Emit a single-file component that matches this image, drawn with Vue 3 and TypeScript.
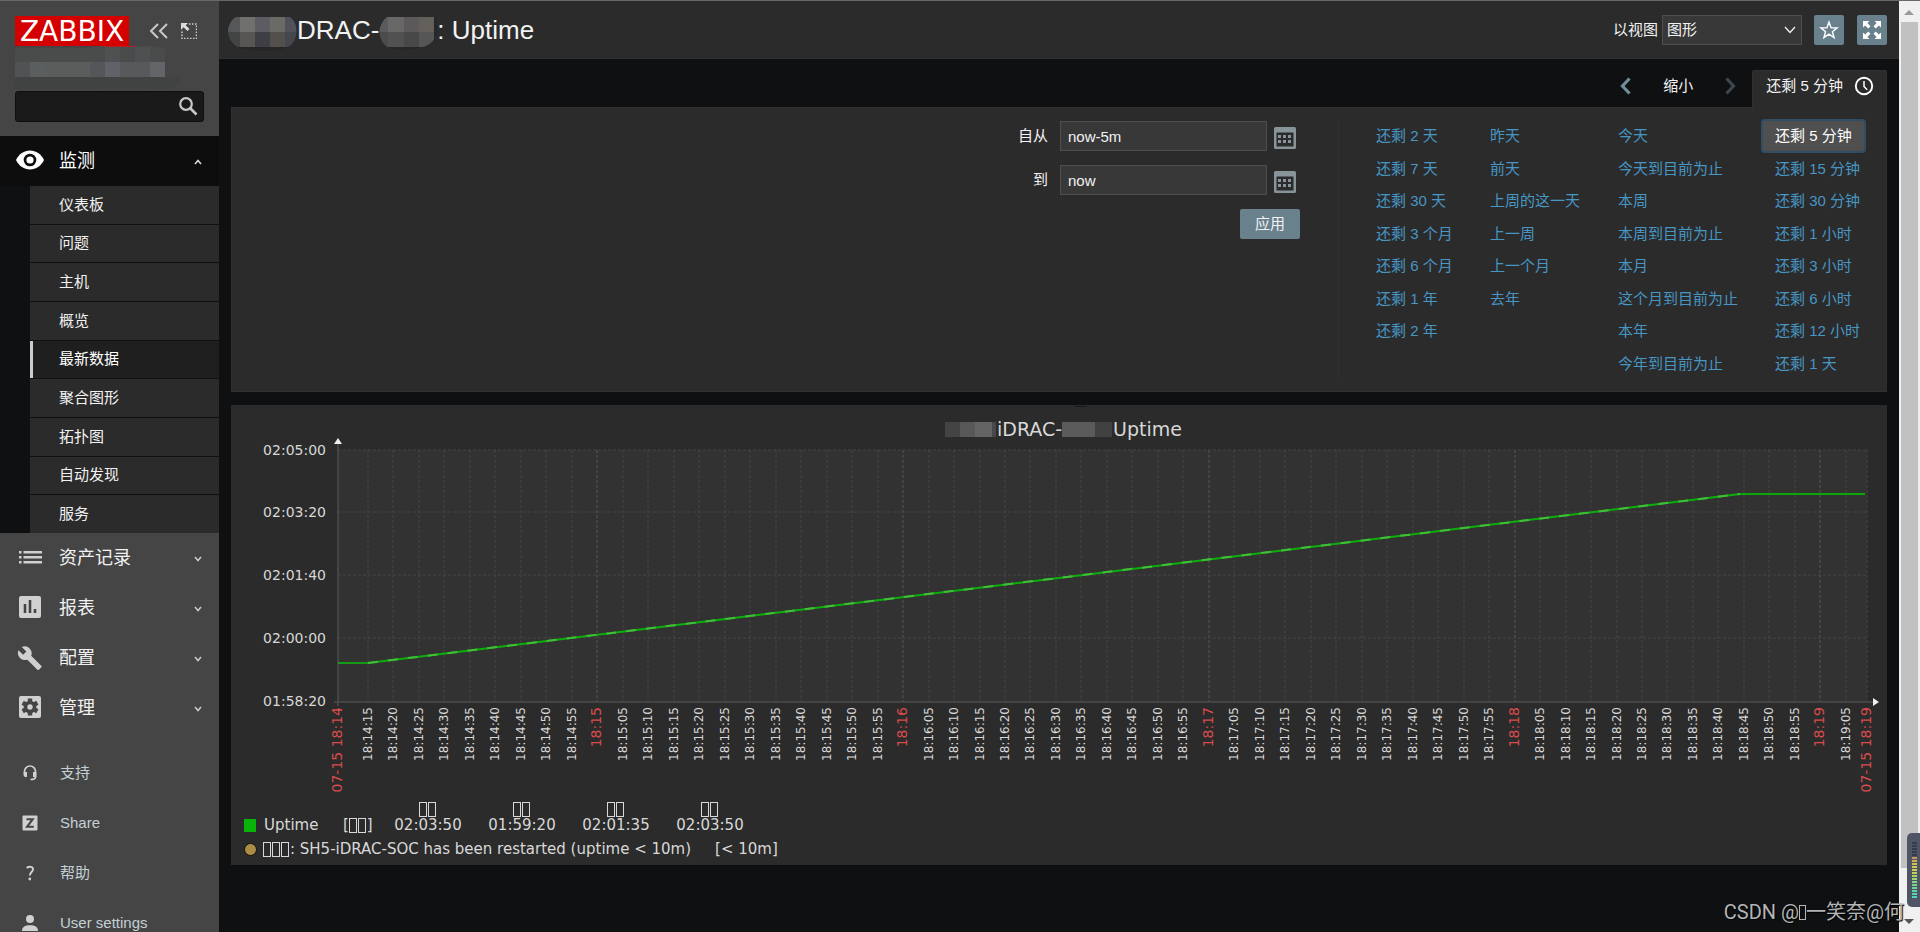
<script setup lang="ts">
import { ref } from 'vue'

interface Tick {
  x: number
  label: string
  major: boolean
}

const search = ref('')
const view = ref('graph')
const from = ref('now-5m')
const to = ref('now')
const activeRange = ref('还剩 5 分钟')

const subItems = ['仪表板', '问题', '主机', '概览', '最新数据', '聚合图形', '拓扑图', '自动发现', '服务']
const activeSub = '最新数据'

const sections = [
  { label: '资产记录', icon: 'list' },
  { label: '报表', icon: 'bars' },
  { label: '配置', icon: 'wrench' },
  { label: '管理', icon: 'gear' },
]

const footerItems = [
  { label: '支持', icon: 'support' },
  { label: 'Share', icon: 'share' },
  { label: '帮助', icon: 'help' },
  { label: 'User settings', icon: 'user' },
]

const rangeColumns = [
  ['还剩 2 天', '还剩 7 天', '还剩 30 天', '还剩 3 个月', '还剩 6 个月', '还剩 1 年', '还剩 2 年'],
  ['昨天', '前天', '上周的这一天', '上一周', '上一个月', '去年'],
  ['今天', '今天到目前为止', '本周', '本周到目前为止', '本月', '这个月到目前为止', '本年', '今年到目前为止'],
  ['还剩 5 分钟', '还剩 15 分钟', '还剩 30 分钟', '还剩 1 小时', '还剩 3 小时', '还剩 6 小时', '还剩 12 小时', '还剩 1 天'],
]

const plot = { left: 107, right: 1636, top: 45, bottom: 297 }
const yTicks = ['02:05:00', '02:03:20', '02:01:40', '02:00:00', '01:58:20'].map((label, i) => ({
  label,
  y: 45 + Math.floor(i * 62.75),
}))

const pad = (n: number) => String(n).padStart(2, '0')
const firstTick = 14 * 60 + 15
const ticks: Tick[] = Array.from({ length: 59 }, (_, i) => {
  const t = firstTick + i * 5
  const minute = pad(Math.floor(t / 60))
  const second = t % 60
  return {
    x: Math.round(137 + i * 25.48),
    label: second === 0 ? `18:${minute}` : `18:${minute}:${pad(second)}`,
    major: second === 0,
  }
}).filter((t) => t.x < 1630)

const stats = ['02:03:50', '01:59:20', '02:01:35', '02:03:50']
const meterColors = [
  '#343b4b', '#343b4b', '#343b4b', '#343b4b', '#343b4b', '#c69a5c', '#ccb04f', '#d0c24a', '#cfcb4c', '#c8d052',
  '#bcd25c', '#aad468', '#98d574', '#86d680', '#76d68c', '#68d698', '#5cd6a6', '#52d6b4', '#4cd6bc',
]
</script>

<template>
  <div class="app">
    <aside class="sidebar">
      <div class="brand">
        <div class="brand-row">
          <a class="logo" href="#">ZABBIX</a>
          <button class="plain collapse" aria-label="Collapse">
            <svg width="18" height="16" viewBox="0 0 18 16"><path d="M8 1 1 8l7 7M17 1l-7 7 7 7" fill="none" stroke="#c8c8c8" stroke-width="2" /></svg>
          </button>
          <button class="plain" aria-label="Compact">
            <svg width="16" height="16" viewBox="0 0 16 16">
              <path d="M8 1h7.500v14.500H1V8" fill="none" stroke="#d0d0d0" stroke-width="1.500" stroke-dasharray="1.500 1.500" />
              <path d="M0 0h7L4.700 2.300 8.500 6 6.500 8 2.500 4.300 0 7z" fill="#dcdcdc" />
            </svg>
          </button>
        </div>
        <svg class="server" width="167" height="44" viewBox="0 0 167 44" aria-hidden="true">
          <path d="M0 2h70L88 0h45l17 2v14H0z" fill="#4a4b4b" />
          <path d="M88 0h32v1H92z" fill="#b02020" />
          <path d="M90 1h15v15H90zM120 1h15v15h-15z" fill="#4f5051" />
          <path d="M0 31h166c-2 8-8 12-20 12l-30-2-45 2H0z" fill="#414242" />
          <path d="M0 16h15v15H0z" fill="#515254" />
          <path d="M15 16h15v15H15z" fill="#5a5e5e" />
          <path d="M30 16h45v15H30z" fill="#5b5c5c" />
          <path d="M75 16h15v15H75z" fill="#545659" />
          <path d="M90 16h15v15H90z" fill="#616269" />
          <path d="M105 16h30v15h-30z" fill="#58595b" />
          <path d="M135 16h15v15h-15z" fill="#646569" />
        </svg>
        <label class="search">
          <input v-model="search" type="text" aria-label="Search" />
          <svg width="19" height="19" viewBox="0 0 19 19"><circle cx="7" cy="7" r="5.800" fill="none" stroke="#c8c8c8" stroke-width="2.200" /><path d="m11.500 11.500 6 6" stroke="#c8c8c8" stroke-width="2.600" /></svg>
        </label>
      </div>

      <nav>
        <a class="section open" href="#">
          <svg width="30" height="30" viewBox="0 0 30 30">
            <path d="M1 14C4 8 9 4.500 15 4.500S26 8 29 14c-3 6-8 9.500-14 9.500S4 20 1 14z" fill="#fff" />
            <circle cx="15" cy="14" r="6.300" fill="#0d0d0d" /><circle cx="15" cy="14" r="3.600" fill="#fff" />
          </svg>
          <span>监测</span>
          <svg class="caret" width="8" height="6" viewBox="0 0 8 6"><path d="m1 5 3-3.500L7 5" fill="none" stroke="#ddd" stroke-width="1.500" /></svg>
        </a>
        <ul class="submenu">
          <li v-for="item in subItems" :key="item">
            <a href="#" :class="{ current: item === activeSub }">{{ item }}</a>
          </li>
        </ul>
        <a v-for="s in sections" :key="s.label" class="section" href="#">
          <svg v-if="s.icon === 'list'" width="30" height="30" viewBox="0 0 30 30" fill="#d0d0d0">
            <path d="M4 8h2.500v2.500H4zM8.500 8H27v2.500H8.500zM4 13h2.500v2.500H4zM8.500 13H27v2.500H8.500zM4 18h2.500v2.500H4zM8.500 18H27v2.500H8.500z" />
          </svg>
          <svg v-else-if="s.icon === 'bars'" width="30" height="30" viewBox="0 0 30 30">
            <rect x="4" y="3" width="22" height="22" rx="2" fill="#d0d0d0" />
            <path d="M10 11v9M15 7v13M20 16v4" stroke="#454545" stroke-width="2.600" />
          </svg>
          <svg v-else-if="s.icon === 'wrench'" width="30" height="30" viewBox="0 0 24 24">
            <path d="m21 18.200-8-8c.8-2 .4-4.300-1.300-5.900C10 2.500 7.500 2.200 5.400 3.100l3.700 3.700-2.600 2.500L2.800 5.700c-1 2-.6 4.600 1.200 6.300 1.600 1.600 4 2.100 5.900 1.300l8 8c.4.400.9.400 1.300 0l1.800-1.900c.5-.3.500-.9 0-1.200z" fill="#d0d0d0" />
          </svg>
          <svg v-else width="30" height="30" viewBox="0 0 30 30">
            <rect x="4" y="3" width="22" height="22" rx="2" fill="#d0d0d0" />
            <g fill="#454545"><circle cx="15" cy="14" r="6.300" /><path d="M12.800 5.500h4.400v17h-4.400z" /><path d="M12.800 5.500h4.400v17h-4.400z" transform="rotate(60 15 14)" /><path d="M12.800 5.500h4.400v17h-4.400z" transform="rotate(120 15 14)" /></g>
            <circle cx="15" cy="14" r="2.700" fill="#d0d0d0" />
          </svg>
          <span>{{ s.label }}</span>
          <svg class="caret" width="8" height="6" viewBox="0 0 8 6"><path d="m1 1 3 3.500L7 1" fill="none" stroke="#ccc" stroke-width="1.500" /></svg>
        </a>
      </nav>

      <div class="footer-nav">
        <a v-for="f in footerItems" :key="f.label" href="#">
          <svg v-if="f.icon === 'support'" width="16" height="16" viewBox="0 0 16 16">
            <path d="M2.500 10V6.500a5.500 5.500 0 0 1 11 0V12c0 1.800-1.500 2.500-5 2.500" fill="none" stroke="#d0d0d0" stroke-width="1.700" />
            <path d="M1.700 7H5v5H3.500a1.800 1.800 0 0 1-1.800-1.800zM11 7h3.300v5H11z" fill="#d0d0d0" />
          </svg>
          <svg v-else-if="f.icon === 'share'" width="16" height="16" viewBox="0 0 16 16">
            <rect x="0.500" y="0.500" width="15" height="15" rx="1" fill="#d0d0d0" />
            <path d="M4.500 4.200h6.300L5 11.800h6.800" fill="none" stroke="#454545" stroke-width="2" />
          </svg>
          <svg v-else-if="f.icon === 'help'" width="16" height="16" viewBox="0 0 16 16">
            <path d="M4.700 3c2-1.800 6.300-1.700 6.300 1.300C11 7 7.800 7 7.800 10.500" fill="none" stroke="#d0d0d0" stroke-width="1.900" />
            <circle cx="7.800" cy="14" r="1.400" fill="#d0d0d0" />
          </svg>
          <svg v-else width="16" height="16" viewBox="0 0 16 16" fill="#d0d0d0">
            <circle cx="8" cy="4" r="4" /><path d="M0 16c0-4 3-5.700 8-5.700s8 1.700 8 5.700z" />
          </svg>
          <span>{{ f.label }}</span>
        </a>
      </div>
    </aside>

    <main class="content">
      <header class="page-head">
        <h1>
          <svg width="69" height="34" viewBox="0 0 69 34" aria-hidden="true">
            <defs><clipPath id="pillA"><path d="M8 0h54a14 17 0 0 1-2 30c-14 6-32 5-46 2C-4 26-3 6 8 0z" /></clipPath></defs>
            <g clip-path="url(#pillA)">
              <path d="M0 0h69v34H0z" fill="#262626" />
              <path d="M0 0h12v15H0z" fill="#565759" /><path d="M12 0h15v15H12z" fill="#70706e" /><path d="M27 0h15v15H27z" fill="#5c5c62" /><path d="M42 0h15v15H42z" fill="#6a6a67" /><path d="M57 0h12v15H57z" fill="#50515a" />
              <path d="M0 15h12v15H0z" fill="#434444" /><path d="M12 15h15v15H12z" fill="#575653" /><path d="M27 15h15v15H27z" fill="#3e3f44" /><path d="M42 15h15v15H42z" fill="#524f4c" /><path d="M57 15h12v15H57z" fill="#45464e" />
            </g>
          </svg><span>DRAC-</span><svg width="58" height="34" viewBox="0 0 58 34" aria-hidden="true">
            <defs><clipPath id="pillB"><path d="M8 0h50c2 14 0 26-14 30-14 4-26 4-36 0-10-8-10-22 0-30z" /></clipPath></defs>
            <g clip-path="url(#pillB)">
              <path d="M0 0h58v34H0z" fill="#272727" />
              <path d="M0 0h9v15H0z" fill="#5a5b5c" /><path d="M9 0h16v15H9z" fill="#686866" /><path d="M25 0h15v15H25z" fill="#5b5959" /><path d="M40 0h15v15H40z" fill="#63605c" />
              <path d="M0 15h9v15H0z" fill="#4b4b4b" /><path d="M9 15h16v15H9z" fill="#515151" /><path d="M25 15h15v15H25z" fill="#484848" /><path d="M40 15h15v15H40z" fill="#565656" />
            </g>
          </svg><span>: Uptime</span>
        </h1>
        <div class="head-tools">
          <label for="view-as">以视图</label>
          <div class="select">
            <select id="view-as" v-model="view">
              <option value="graph">图形</option>
              <option value="values">值</option>
            </select>
            <svg width="12" height="8" viewBox="0 0 12 8"><path d="m1 1 5 5.500L11 1" fill="none" stroke="#f2f2f2" stroke-width="1.300" /></svg>
          </div>
          <button class="icon-btn" aria-label="Favourite">
            <svg width="20" height="20" viewBox="0 0 20 20"><path d="m10 2 2.100 5.700 6 .2-4.700 3.800 1.700 5.900L10 14.200l-5.100 3.400 1.700-5.900L1.900 7.900l6-.2z" fill="none" stroke="#fff" stroke-width="1.400" /></svg>
          </button>
          <button class="icon-btn" aria-label="Kiosk mode">
            <svg width="20" height="20" viewBox="0 0 20 20" fill="#fff">
              <path id="arrow" d="M1 1h6.500L5.400 3.100 8.500 6.200 6.200 8.500 3.100 5.400 1 7.500z" />
              <use href="#arrow" transform="rotate(90 10 10)" /><use href="#arrow" transform="rotate(180 10 10)" /><use href="#arrow" transform="rotate(270 10 10)" />
            </svg>
          </button>
        </div>
      </header>

      <div class="time-tabs">
        <button class="plain step" aria-label="Previous"><svg width="11" height="18" viewBox="0 0 11 18"><path d="M9.500 1.500 2.500 9l7 7.500" fill="none" stroke="#718d9a" stroke-width="3.200" /></svg></button>
        <button class="plain zoom-out">缩小</button>
        <button class="plain step" aria-label="Next"><svg width="11" height="18" viewBox="0 0 11 18"><path d="m1.500 1.500 7 7.500-7 7.500" fill="none" stroke="#3c474d" stroke-width="3.200" /></svg></button>
        <a class="tab" href="#">{{ activeRange }}
          <svg width="20" height="20" viewBox="0 0 20 20"><circle cx="10" cy="10" r="8.200" fill="none" stroke="#fff" stroke-width="1.900" /><path d="M10 5v5.500l3.200 3.200" fill="none" stroke="#fff" stroke-width="1.500" /></svg>
        </a>
      </div>

      <section class="filter">
        <form class="period" @submit.prevent>
          <div v-for="row in [{ id: 'from', label: '自从' }, { id: 'to', label: '到' }]" :key="row.id" class="field">
            <label :for="row.id">{{ row.label }}</label>
            <input v-if="row.id === 'from'" id="from" v-model="from" type="text" />
            <input v-else id="to" v-model="to" type="text" />
            <button type="button" class="plain calendar" :aria-label="row.label + ' calendar'">
              <svg width="24" height="24" viewBox="0 0 24 24">
                <rect x="1" y="1" width="22" height="22" rx="1.500" fill="#87949a" /><path d="M3.500 6.500h17v14h-17z" fill="#2b2b2b" />
                <g fill="#87949a"><path d="M5 9h3v3H5zM10 9h3v3h-3zM15 9h3v3h-3zM5 14h3v3H5zM10 14h3v3h-3zM15 14h3v3h-3z" /></g>
              </svg>
            </button>
          </div>
          <button class="apply" type="submit">应用</button>
        </form>
        <div class="ranges">
          <ul v-for="(col, i) in rangeColumns" :key="i">
            <li v-for="r in col" :key="r">
              <a href="#" :class="{ selected: r === activeRange }" @click.prevent="activeRange = r">{{ r }}</a>
            </li>
          </ul>
        </div>
      </section>

      <section class="graph">
        <svg class="plot" viewBox="0 0 1656 396" role="img" aria-label="Uptime">
          <g>
            <path d="M714 17h15v15h-15z" fill="#444" /><path d="M729 17h15v15h-15z" fill="#585858" /><path d="M744 17h17v15h-17z" fill="#646464" /><path d="M761 17h4v15h-4z" fill="#484848" />
            <path d="M831 17h33v15h-33z" fill="#5b5b5b" /><path d="M864 17h17v15h-17z" fill="#414141" />
            <path d="M844 1h12v1h-12z" fill="#161718" />
          </g>
          <text class="title" x="766" y="31">iDRAC-</text>
          <text class="title" x="882" y="31">Uptime</text>

          <rect :x="plot.left" :y="plot.top" :width="plot.right - plot.left" :height="plot.bottom - plot.top" fill="#323232" />
          <g class="grid">
            <line v-for="t in ticks" :key="t.label" :x1="t.x" :x2="t.x" :y1="plot.top" :y2="plot.bottom" :class="{ major: t.major }" />
            <line :x1="plot.right" :x2="plot.right" :y1="plot.top" :y2="plot.bottom" />
            <line v-for="t in yTicks.slice(0, 4)" :key="t.label" :x1="plot.left" :x2="plot.right" :y1="t.y" :y2="t.y" />
          </g>
          <path d="M107 38v263M103 297h1540" stroke="#4c4c4c" stroke-width="1.500" fill="none" />
          <path d="m107 33 4 6h-8zM1648 297l-6-4v8z" fill="#f0f0f0" />
          <text v-for="t in yTicks" :key="t.label" class="y-label" x="95" :y="t.y + 5">{{ t.label }}</text>
          <text v-for="t in ticks" :key="t.label" class="x-label" :class="{ major: t.major }" :transform="`translate(${t.x + 4} 302) rotate(-90)`">{{ t.label }}</text>
          <text class="x-label major" :transform="`translate(${plot.left + 4} 302) rotate(-90)`">07-15 18:14</text>
          <text class="x-label major" :transform="`translate(${plot.right + 4} 302) rotate(-90)`">07-15 18:19</text>

          <path d="M107 258h30" stroke="#169a16" stroke-width="2" />
          <path d="M137 258 1509 89" stroke="#0cae0c" stroke-width="2" />
          <path d="M137 258 1509 89" stroke="#43bd3a" stroke-width="2" stroke-dasharray="10 10" />
          <path d="M1509 89h125" stroke="#08a808" stroke-width="2" />
        </svg>

        <table class="legend">
          <tbody>
            <tr>
              <td colspan="3"></td>
              <td v-for="(s, i) in stats" :key="i" class="stat"><i class="box"></i><i class="box"></i></td>
            </tr>
            <tr>
              <td class="mark"><i class="swatch"></i></td>
              <td class="name">Uptime</td>
              <td class="func">[<i class="box"></i><i class="box"></i>]</td>
              <td v-for="(s, i) in stats" :key="i" class="stat">{{ s }}</td>
            </tr>
          </tbody>
        </table>
        <div class="trigger">
          <i class="dot"></i>
          <span><i class="box"></i><i class="box"></i><i class="box"></i>: SH5-iDRAC-SOC has been restarted (uptime &lt; 10m)</span>
          <span>[&lt; 10m]</span>
        </div>
      </section>
    </main>

    <div class="scrollbar" aria-hidden="true">
      <svg width="19" height="21" viewBox="0 0 19 21"><path d="m5 14 5-5 5 5z" fill="#9a9a9a" /></svg>
      <div class="thumb"></div>
      <svg width="19" height="21" viewBox="0 0 19 21"><path d="m5 8 5 5 5-5z" fill="#555" /></svg>
    </div>

    <div class="meter" aria-hidden="true">
      <i v-for="(c, i) in meterColors" :key="i" :style="{ background: c }"></i>
    </div>
    <div class="watermark">CSDN @<i class="box"></i>一笑奈@何</div>
  </div>
</template>

<style>
html,
body {
  margin: 0;
  background: #0e1012;
}
</style>

<style scoped>
* {
  box-sizing: border-box;
}
.app {
  position: relative;
  display: flex;
  height: 100vh;
  overflow: hidden;
  border-top: 1px solid #686868;
  background: #0e1012;
  color: #f2f2f2;
  font: 15px/20px "Liberation Sans", "Noto Sans CJK SC", sans-serif;
}
ul {
  margin: 0;
  padding: 0;
  list-style: none;
}
a {
  color: inherit;
  text-decoration: none;
}
svg {
  display: block;
  flex: none;
}
button,
input,
select {
  font: inherit;
  color: inherit;
}
.plain {
  display: flex;
  padding: 0;
  border: 0;
  background: none;
}

/* sidebar */
.sidebar {
  flex: none;
  width: 219px;
  overflow: hidden;
  background: #454545;
}
.brand {
  height: 135px;
  padding: 15px 15px 0;
}
.brand-row {
  display: flex;
  align-items: center;
}
.logo {
  width: 114px;
  height: 30px;
  margin-right: 21px;
  background: #d40000;
  color: #fff;
  font: 28px/32px "DejaVu Sans", sans-serif;
  text-align: center;
}
.collapse {
  margin-right: 13px;
}
.server {
  height: 44px;
}
.search {
  display: flex;
  align-items: center;
  height: 31px;
  margin-top: 1px;
  padding-right: 5px;
  border: 1px solid #0a1014;
  border-radius: 3px;
  background: #1a1a1a;
}
.search input {
  flex: 1;
  min-width: 0;
  border: 0;
  outline: 0;
  background: none;
  padding: 0 8px;
}
.section {
  display: flex;
  align-items: center;
  height: 50px;
  padding: 0 17px 0 15px;
  font-size: 18px;
}
.section > svg:first-child {
  margin-right: 14px;
}
.section .caret {
  margin: 2px 0 0 auto;
}
.section.open {
  background: #0d0d0d;
  color: #fff;
}
.submenu {
  display: grid;
  grid-auto-rows: 1fr;
  row-gap: 1px;
  height: 347px;
  padding-left: 30px;
  background: #0e1012;
}
.submenu a {
  display: flex;
  align-items: center;
  height: 100%;
  padding-left: 29px;
  background: #2b2b2b;
}
.submenu a.current {
  padding-left: 26px;
  border-left: 3px solid #ccc;
  background: #1f1f1f;
  color: #fff;
}
.footer-nav {
  margin-top: 15px;
  color: #c3d0d6;
}
.footer-nav a {
  display: flex;
  align-items: center;
  gap: 22px;
  height: 50px;
  padding-left: 22px;
}

/* content */
.content {
  flex: 1;
  min-width: 0;
}
.page-head {
  display: flex;
  align-items: center;
  justify-content: space-between;
  height: 58px;
  padding: 0 12px 0 9px;
  border-bottom: 1px solid #303030;
  background: #2b2b2b;
}
h1 {
  display: flex;
  align-items: center;
  margin: 0;
  font-size: 26px;
  font-weight: 400;
  line-height: 30px;
  white-space: pre;
}
h1 svg {
  margin-top: 8px;
}
.head-tools {
  display: flex;
  align-items: center;
}
.select {
  position: relative;
  width: 140px;
  margin: 0 12px 0 4px;
}
.select select {
  width: 100%;
  height: 30px;
  padding: 0 4px;
  border: 1px solid #4f4f4f;
  border-radius: 0;
  appearance: none;
  background: #383838;
}
.select svg {
  position: absolute;
  top: 11px;
  right: 6px;
  pointer-events: none;
}
.icon-btn {
  display: flex;
  align-items: center;
  justify-content: center;
  width: 30px;
  height: 30px;
  padding: 0;
  border: 0;
  border-radius: 2px;
  background: #69808d;
}
.icon-btn + .icon-btn {
  margin-left: 13px;
}
.time-tabs {
  display: flex;
  align-items: center;
  justify-content: flex-end;
  height: 48px;
  padding: 11px 12px 0 0;
}
.time-tabs .plain {
  padding-bottom: 5px;
}
.step + .zoom-out {
  margin: 0 32px;
}
.tab {
  display: flex;
  align-items: center;
  gap: 11px;
  height: 38px;
  margin: 0 0 -1px 16px;
  padding: 0 12px 7px 13px;
  border: 1px solid #303030;
  border-bottom: 0;
  border-radius: 2px 2px 0 0;
  background: #2b2b2b;
  z-index: 1;
}
.filter {
  display: flex;
  justify-content: flex-end;
  margin: 0 12px;
  padding: 13px 19px 10px 0;
  border: 1px solid #303030;
  background: #2b2b2b;
}
.period {
  display: flex;
  flex-direction: column;
  align-items: flex-end;
  gap: 14px;
  padding-right: 38px;
}
.field {
  display: flex;
  align-items: center;
  padding-right: 3px;
}
.field input {
  width: 207px;
  height: 30px;
  margin: 0 6px 0 12px;
  padding: 0 7px;
  border: 1px solid #4f4f4f;
  background: #383838;
}
.calendar {
  padding-top: 4px;
}
.apply {
  width: 60px;
  height: 30px;
  padding: 0;
  border: 0;
  border-radius: 2px;
  background: #69808d;
}
.ranges {
  display: grid;
  grid-template-columns: 114px 128px 143px 106px;
  padding-left: 37px;
  border-left: 1px solid #303030;
  color: #4796c4;
  white-space: nowrap;
}
.ranges ul {
  display: grid;
  grid-template-rows: repeat(8, minmax(0, 1fr));
  height: 260px;
}
.ranges li {
  display: flex;
  align-items: center;
  padding-bottom: 2px;
}
.ranges ul:last-child a {
  padding: 5px 12px;
  border: 2px solid transparent;
}
.ranges ul:last-child a.selected {
  border-color: #314d61;
  border-radius: 4px;
  background: #4f4f4f;
  color: #fff;
}
.graph {
  margin: 13px 12px 0;
  padding-bottom: 4px;
  background: #2b2b2b;
  color: #d8d8d8;
  font: 15px/16px "DejaVu Sans", sans-serif;
}
.plot {
  width: 100%;
  height: auto;
}
.plot text {
  fill: #d8d8d8;
  font-family: "DejaVu Sans", sans-serif;
}
.plot .title {
  font-size: 19px;
}
.plot .y-label {
  font-size: 14px;
  text-anchor: end;
}
.plot .x-label {
  font-size: 12px;
  text-anchor: end;
}
.plot .x-label.major {
  fill: #d84c4c;
  font-size: 14px;
}
.grid line {
  stroke: #454545;
  stroke-dasharray: 3 2;
}
.grid line.major {
  stroke: #575757;
}
.legend {
  margin-left: 13px;
  border-spacing: 0;
  table-layout: fixed;
}
.legend td {
  height: 16px;
  padding: 0;
}
.legend .mark {
  width: 20px;
}
.legend .name {
  width: 79px;
}
.legend .func {
  width: 38px;
}
.legend .stat {
  width: 94px;
  text-align: center;
}
.box {
  display: inline-block;
  width: 8px;
  height: 15px;
  margin: 0 1px 0 0;
  border: 1px solid currentColor;
  vertical-align: -3px;
}
.swatch {
  display: block;
  width: 12px;
  height: 13px;
  background: #08b408;
}
.trigger {
  display: flex;
  align-items: center;
  height: 24px;
  margin: 4px 0 0 13px;
}
.trigger span + span {
  margin-left: 24px;
}
.dot {
  width: 13px;
  height: 13px;
  margin-right: 6px;
  border: 1px solid #14110a;
  border-radius: 50%;
  background: #ac8c44;
}

/* window chrome */
.scrollbar {
  display: flex;
  flex: none;
  flex-direction: column;
  width: 21px;
  padding: 0 2px 0 0;
  background: #f0f0f0;
}
.thumb {
  flex: 1;
  margin: 0 0 43px 2px;
  background: #c1c1c1;
}
.meter {
  position: absolute;
  right: 0;
  top: 832px;
  display: flex;
  flex-direction: column;
  gap: 1px;
  width: 13px;
  padding: 9px 3px 9px 5px;
  border-radius: 5px 0 0 5px;
  background: #505565;
}
.meter i {
  height: 2px;
}
.watermark {
  position: absolute;
  right: 16px;
  bottom: 6px;
  color: #b4b5b6;
  font: 20px/28px Roboto, "Noto Sans CJK SC", sans-serif;
  text-shadow: 1px 1px 1px #000;
}
.watermark .box {
  width: 7px;
  margin: 0;
  vertical-align: -1px;
}
</style>
